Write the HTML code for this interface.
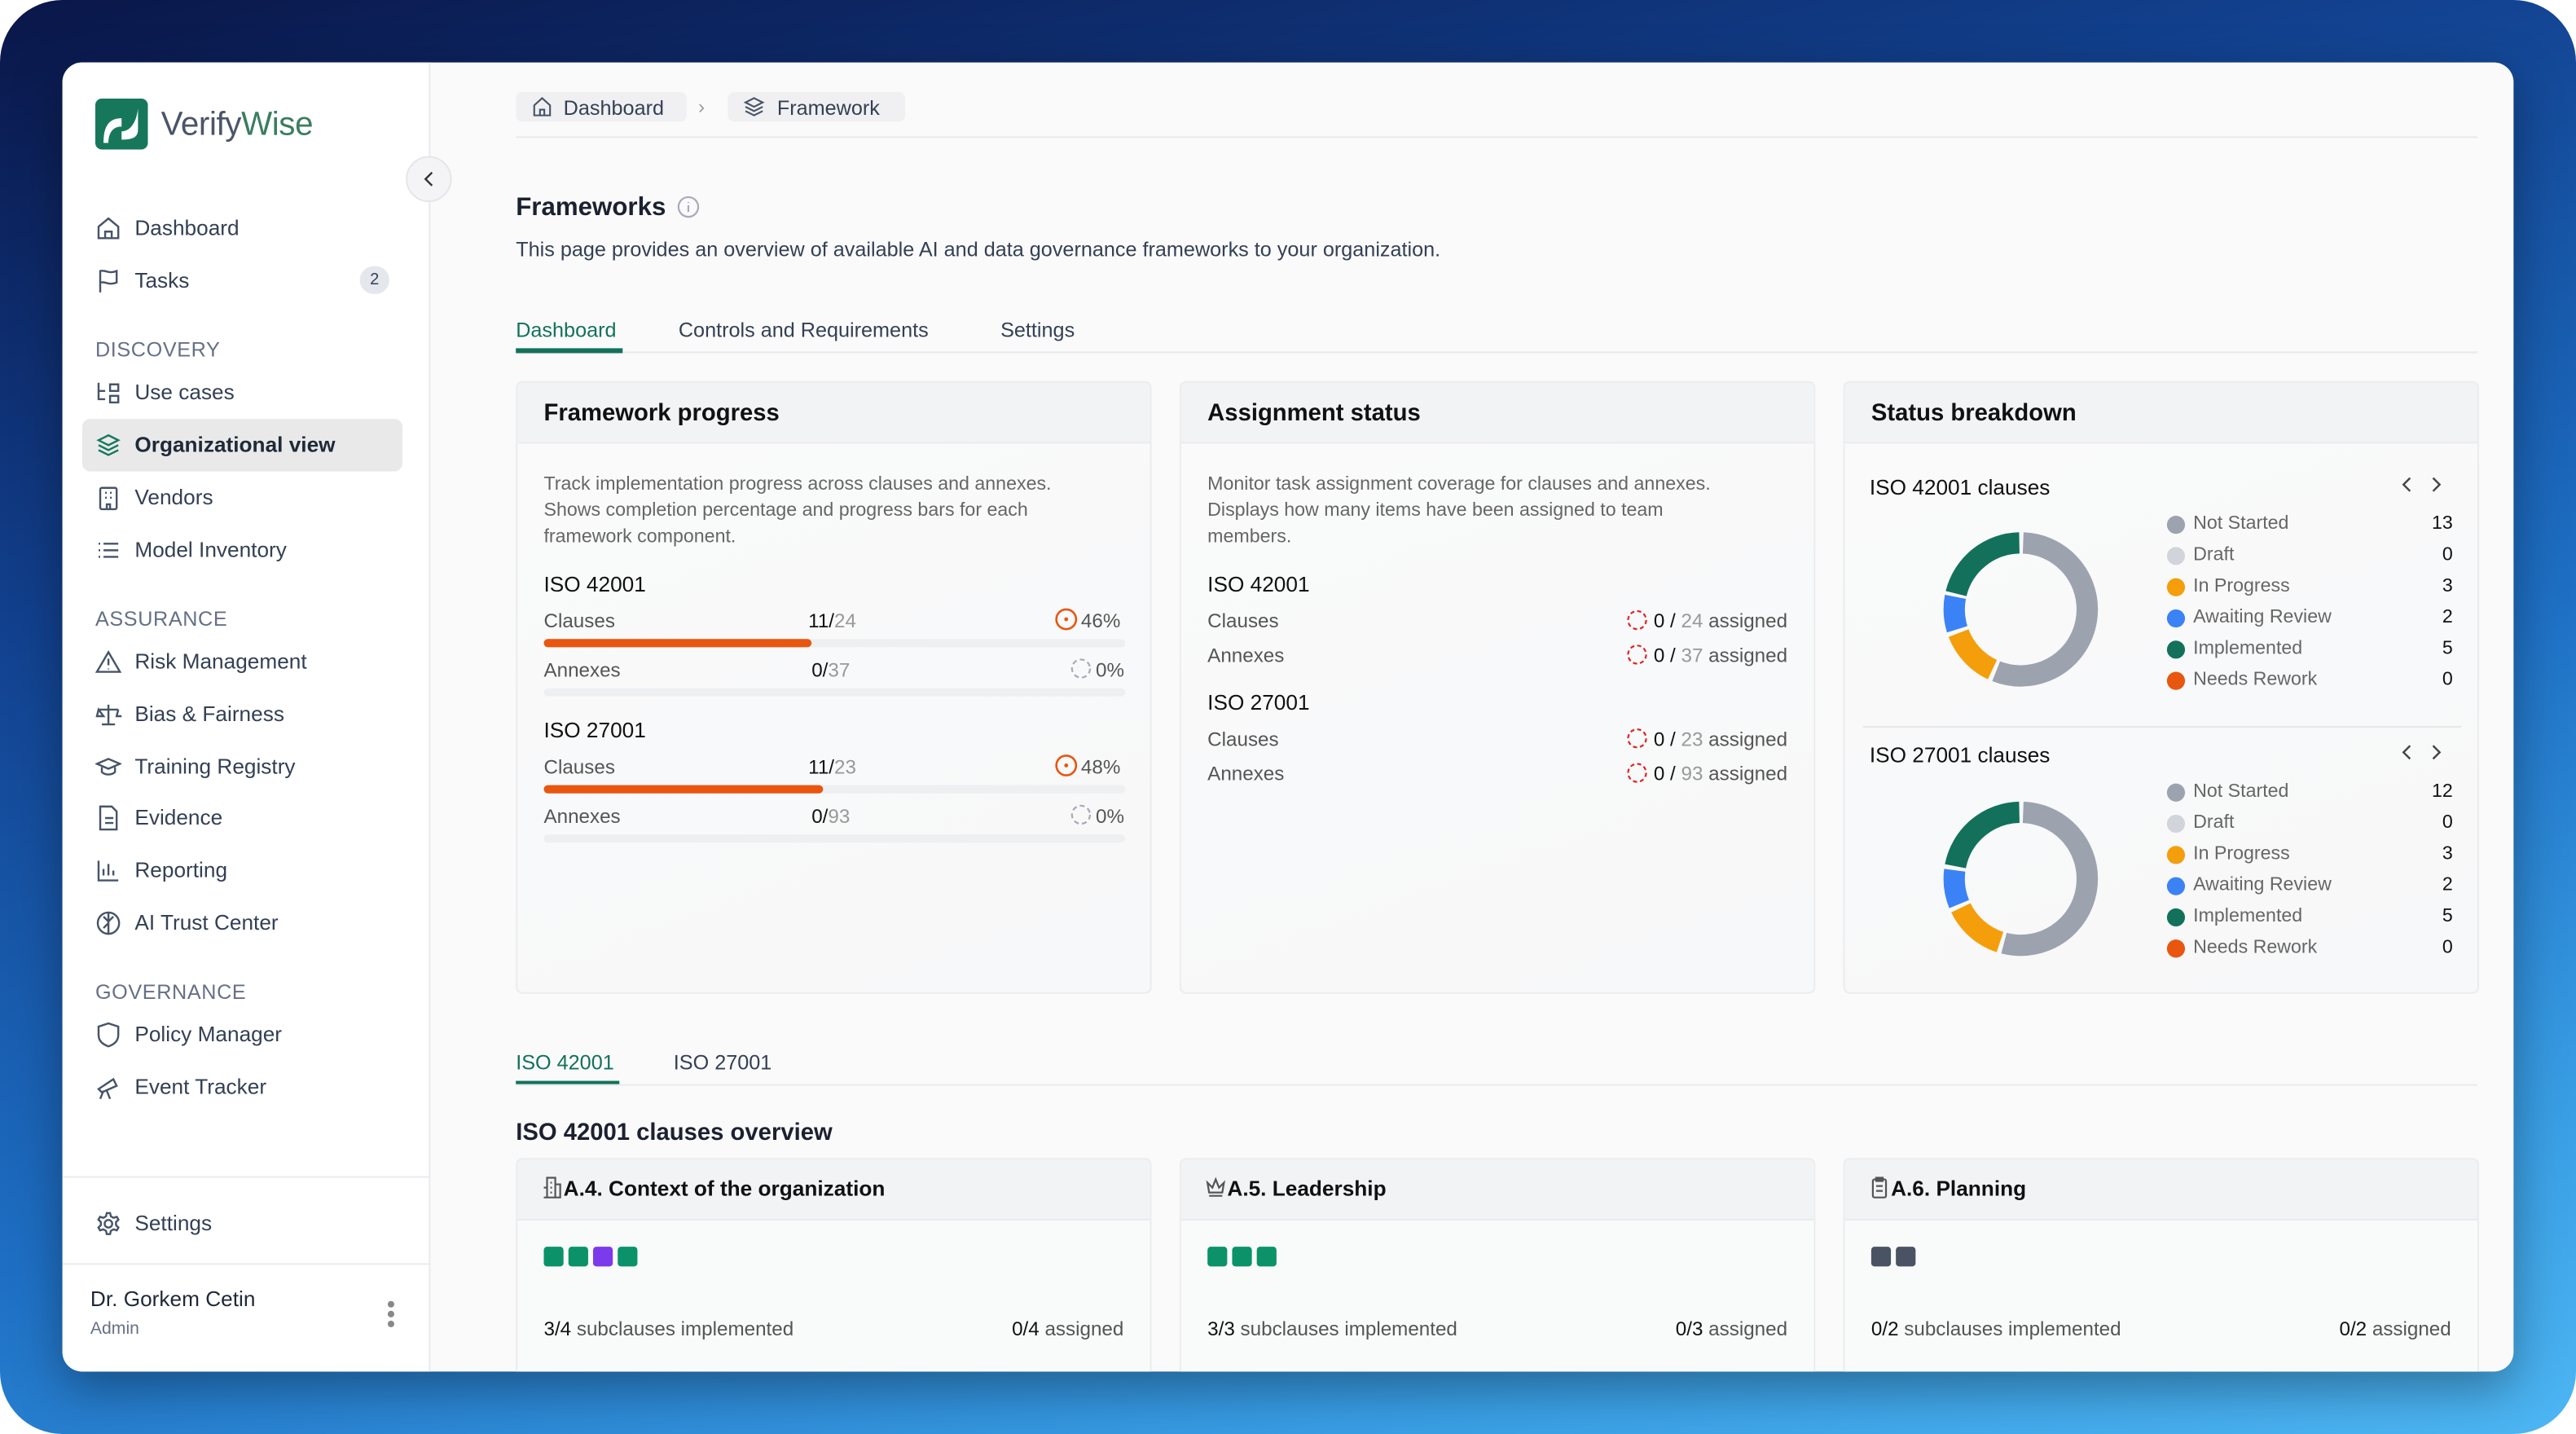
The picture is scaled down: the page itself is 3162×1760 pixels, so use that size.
<!DOCTYPE html>
<html><head><meta charset="utf-8">
<style>
*{box-sizing:border-box;margin:0;padding:0}
html,body{width:3162px;height:1760px;overflow:hidden;background:#fff}
#s{position:absolute;left:0;top:0;width:1568px;height:873px;transform:scale(2.01658,2.01604);transform-origin:0 0;font-family:"Liberation Sans",sans-serif;color:#1c2130}
.bg{position:absolute;left:0;top:0;width:1568px;height:873px;border-radius:38px;background:linear-gradient(165deg,#0a1648 0%,#12418f 30%,#1e6fc4 60%,#3a9fe5 85%,#4db6f3 100%)}
.win{position:absolute;left:38px;top:38px;width:1492px;height:797px;border-radius:12px;background:#fafafa;overflow:hidden;box-shadow:0 10px 30px rgba(0,0,0,.35)}
.side{position:absolute;left:0;top:0;width:224px;height:797px;background:#fff;border-right:1px solid #eaeaee}
.a{position:absolute;white-space:nowrap}
.nav{position:absolute;left:20px;font-size:13px;color:#344054;line-height:16px;white-space:nowrap}
.nav svg{position:absolute;left:0;top:0}
.nav span{position:absolute;left:24px;top:0;white-space:nowrap}
.sec{position:absolute;left:20px;font-size:12.5px;color:#667085;letter-spacing:.3px}
.card{position:absolute;top:194px;width:387px;height:373px;border:1px solid #ececef;border-radius:4px;background:linear-gradient(160deg,#fafafa,#f7f8f9);overflow:hidden}
.ch{height:37px;background:#f2f3f5;border-bottom:1px solid #ebebee;font-size:14.5px;font-weight:bold;padding:11px 16px;color:#111;white-space:nowrap}
.t12{font-size:11.5px;color:#666;line-height:16px}
.lbl{font-size:12px;color:#555}
.h13{font-size:13px;color:#111}
.bar{position:absolute;height:5px;border-radius:3px;background:#eeeff1}
.bar i{position:absolute;left:0;top:0;height:5px;border-radius:3px;background:#e8560f}
.leg{font-size:11.5px;color:#666}
.dot{position:absolute;width:11px;height:11px;border-radius:50%}
.num{font-size:11.5px;color:#111;text-align:right;width:30px}
.bc{position:absolute;top:667px;width:387px;height:140px;border:1px solid #ececef;border-radius:4px;background:#f9fafa;overflow:hidden}
.bc .ch{font-size:13px;padding:10px 14px}
.bc .ch svg{vertical-align:-2px}
.sq{display:inline-block;width:12px;height:12px;border-radius:2px;margin-right:3px}
</style></head><body><div id="s">
<div class="bg"></div>
<div class="win">
 <div class="side">
  <svg class="a" style="left:20px;top:22px" width="32" height="31" viewBox="0 0 32 31"><rect width="32" height="31" rx="4" fill="#17775a"/><path d="M5 27 C5 16 9 12 16 12 L16 20 C21 20 25 15 26 6 L26 19 C26 24 22 25 16 25 L16 17 C10 17 8 22 8 27Z" fill="#fff"/></svg>
  <div class="a" style="left:60px;top:27px;font-size:20px;letter-spacing:-.2px"><span style="color:#4b5568">Verify</span><span style="color:#3b7d60">Wise</span></div>
  <div class="nav" style="top:93px"><svg width="16" height="16" viewBox="0 0 16 16" fill="none" stroke="#475467" stroke-width="1.2"><path d="M2 7L8 2l6 5v7H2z M6 14V10h4v4"/></svg><span>Dashboard</span></div>
  <div class="nav" style="top:125px"><svg width="16" height="16" viewBox="0 0 16 16" fill="none" stroke="#475467" stroke-width="1.2"><path d="M3 15V2c3-1 5 2 10 0v7c-5 2-7-1-10 0"/></svg><span>Tasks</span></div>
  <div class="a" style="left:181px;top:124px;width:18px;height:17px;border-radius:9px;background:#e4e7ec;font-size:10px;color:#344054;text-align:center;line-height:17px">2</div>
  <div class="sec" style="top:168px">DISCOVERY</div>
  <div class="nav" style="top:193px"><svg width="16" height="16" viewBox="0 0 16 16" fill="none" stroke="#475467" stroke-width="1.2"><path d="M2 2v10h4M2 7h4M9 3h5v4H9zM9 10h5v4H9z"/></svg><span>Use cases</span></div>
  <div class="a" style="left:12px;top:217px;width:195px;height:32px;border-radius:5px;background:#e9e9ea"></div>
  <div class="nav" style="top:225px;font-weight:bold;color:#1f2937"><svg width="16" height="16" viewBox="0 0 16 16" fill="none" stroke="#17775a" stroke-width="1.2"><path d="M8 2l6 3-6 3-6-3zM2 8l6 3 6-3M2 11l6 3 6-3"/></svg><span>Organizational view</span></div>
  <div class="nav" style="top:257px"><svg width="16" height="16" viewBox="0 0 16 16" fill="none" stroke="#475467" stroke-width="1.2"><rect x="3" y="2" width="10" height="13" rx="1"/><path d="M6 5h1M9 5h1M6 8h1M9 8h1M7 15v-3h2v3"/></svg><span>Vendors</span></div>
  <div class="nav" style="top:289px"><svg width="16" height="16" viewBox="0 0 16 16" fill="none" stroke="#475467" stroke-width="1.2"><path d="M5 4h9M5 8h9M5 12h9M2 4h1M2 8h1M2 12h1"/></svg><span>Model Inventory</span></div>
  <div class="sec" style="top:332px">ASSURANCE</div>
  <div class="nav" style="top:357px"><svg width="16" height="16" viewBox="0 0 16 16" fill="none" stroke="#475467" stroke-width="1.2"><path d="M8 2l7 12H1zM8 6v4M8 12v.5"/></svg><span>Risk Management</span></div>
  <div class="nav" style="top:389px"><svg width="16" height="16" viewBox="0 0 16 16" fill="none" stroke="#475467" stroke-width="1.2"><path d="M8 2v12M4 14h8M2 5h12M2 5l-1 4h4zM14 5l-1 4h4"/></svg><span>Bias &amp; Fairness</span></div>
  <div class="nav" style="top:421px"><svg width="16" height="16" viewBox="0 0 16 16" fill="none" stroke="#475467" stroke-width="1.2"><path d="M1 6l7-3 7 3-7 3zM4 8v3c2 2 6 2 8 0V8"/></svg><span>Training Registry</span></div>
  <div class="nav" style="top:452px"><svg width="16" height="16" viewBox="0 0 16 16" fill="none" stroke="#475467" stroke-width="1.2"><path d="M3 1h7l3 3v11H3zM6 8h5M6 11h5"/></svg><span>Evidence</span></div>
  <div class="nav" style="top:484px"><svg width="16" height="16" viewBox="0 0 16 16" fill="none" stroke="#475467" stroke-width="1.2"><path d="M2 2v12h12M5 11V7M8 11V4M11 11V8"/></svg><span>Reporting</span></div>
  <div class="nav" style="top:516px"><svg width="16" height="16" viewBox="0 0 16 16" fill="none" stroke="#475467" stroke-width="1.2"><circle cx="8" cy="8" r="6.5"/><path d="M8 1.5v13M5 4l3 3 3-3M5 11l3-3"/></svg><span>AI Trust Center</span></div>
  <div class="sec" style="top:559px">GOVERNANCE</div>
  <div class="nav" style="top:584px"><svg width="16" height="16" viewBox="0 0 16 16" fill="none" stroke="#475467" stroke-width="1.2"><path d="M8 1l6 2v5c0 4-3 6-6 7-3-1-6-3-6-7V3z"/></svg><span>Policy Manager</span></div>
  <div class="nav" style="top:616px"><svg width="16" height="16" viewBox="0 0 16 16" fill="none" stroke="#475467" stroke-width="1.2"><path d="M2 9l9-6 2 4-9 4zM5 10l-2 5M7 10l2 5"/></svg><span>Event Tracker</span></div>
  <div class="a" style="left:0;top:678px;width:224px;height:1px;background:#ebebef"></div>
  <div class="nav" style="top:699px"><svg width="16" height="16" viewBox="0 0 16 16" fill="none" stroke="#475467" stroke-width="1.2"><circle cx="8" cy="8" r="2.3"/><path d="M7 1.5h2l.5 2 1.6.9 2-.6 1 1.7-1.5 1.5v1.8l1.5 1.5-1 1.7-2-.6-1.6.9-.5 2H7l-.5-2-1.6-.9-2 .6-1-1.7 1.5-1.5V7L1.9 5.5l1-1.7 2 .6L6.5 3.5z"/></svg><span>Settings</span></div>
  <div class="a" style="left:0;top:731px;width:224px;height:1px;background:#ebebef"></div>
  <div class="a" style="left:17px;top:745px;font-size:13px;color:#1f2937">Dr. Gorkem Cetin</div>
  <div class="a" style="left:17px;top:765px;font-size:10.5px;color:#667085">Admin</div>
  <div class="a" style="left:198px;top:754px;width:4px"><i style="display:block;width:4px;height:4px;border-radius:50%;background:#888;margin-bottom:2px"></i><i style="display:block;width:4px;height:4px;border-radius:50%;background:#888;margin-bottom:2px"></i><i style="display:block;width:4px;height:4px;border-radius:50%;background:#888"></i></div>
 </div>
 <div class="a" style="left:209px;top:57px;width:28px;height:28px;border-radius:50%;background:#f4f4f6;border:1px solid #e6e6ea"><svg width="28" height="28" viewBox="0 0 28 28" style="position:absolute;left:-1px;top:-1px" fill="none" stroke="#333" stroke-width="1.2"><path d="M16 10l-4 4 4 4"/></svg></div>

 <!-- main -->
 <div class="a" style="left:276px;top:18px;width:104px;height:18px;border-radius:4px;background:#f0f0f2"></div>
 <svg class="a" style="left:285px;top:20px" width="14" height="14" viewBox="0 0 16 16" fill="none" stroke="#475467" stroke-width="1.2"><path d="M2.5 7L8 2l5.5 5v7h-11zM6.5 14v-4h3v4"/></svg>
 <div class="a" style="left:305px;top:21px;font-size:12.5px;color:#344054">Dashboard</div>
 <div class="a" style="left:387px;top:20px;font-size:12px;color:#999">›</div>
 <div class="a" style="left:405px;top:18px;width:108px;height:18px;border-radius:4px;background:#f0f0f2"></div>
 <svg class="a" style="left:414px;top:20px" width="14" height="14" viewBox="0 0 16 16" fill="none" stroke="#475467" stroke-width="1.2"><path d="M8 2l6 3-6 3-6-3zM2 8l6 3 6-3M2 11l6 3 6-3"/></svg>
 <div class="a" style="left:435px;top:21px;font-size:12.5px;color:#344054">Framework</div>
 <div class="a" style="left:276px;top:45px;width:1194px;height:1px;background:#e9e9ee"></div>

 <div class="a" style="left:276px;top:80px;font-size:15.5px;font-weight:bold;color:#1c2130">Frameworks</div>
 <svg class="a" style="left:374px;top:81px" width="14" height="14" viewBox="0 0 14 14" fill="none" stroke="#aab" stroke-width="1.1"><circle cx="7" cy="7" r="6"/><path d="M7 6v4M7 4v.5"/></svg>
 <div class="a" style="left:276px;top:107px;font-size:12.5px;color:#344054">This page provides an overview of available AI and data governance frameworks to your organization.</div>

 <div class="a" style="left:276px;top:156px;font-size:12.5px;color:#13715b">Dashboard</div>
 <div class="a" style="left:375px;top:156px;font-size:12.5px;color:#344054">Controls and Requirements</div>
 <div class="a" style="left:571px;top:156px;font-size:12.5px;color:#344054">Settings</div>
 <div class="a" style="left:276px;top:176px;width:1194px;height:1px;background:#e9e9ee"></div>
 <div class="a" style="left:276px;top:174px;width:65px;height:3px;background:#13715b"></div>

 <!-- card 1 -->
 <div class="card" style="left:276px">
  <div class="ch">Framework progress</div>
  <div class="a t12" style="left:16px;top:54px">Track implementation progress across clauses and annexes.<br>Shows completion percentage and progress bars for each<br>framework component.</div>
  <div class="a h13" style="left:16px;top:115px">ISO 42001</div>
  <div class="a lbl" style="left:16px;top:138px">Clauses</div>
  <div class="a lbl" style="left:177px;top:138px;color:#111">11/<span style="color:#999">24</span></div>
  <svg class="a" style="left:327px;top:137px" width="14" height="14"><circle cx="7" cy="7" r="6" fill="none" stroke="#e8560f" stroke-width="1.3"/><circle cx="7" cy="7" r="1.2" fill="#e8560f"/></svg>
  <div class="a lbl" style="left:343px;top:138px">46%</div>
  <div class="bar" style="left:16px;top:156px;width:354px"><i style="width:163px"></i></div>
  <div class="a lbl" style="left:16px;top:168px">Annexes</div>
  <div class="a lbl" style="left:179px;top:168px;color:#111">0/<span style="color:#999">37</span></div>
  <svg class="a" style="left:336px;top:167px" width="14" height="14"><circle cx="7" cy="7" r="5.5" fill="none" stroke="#aab" stroke-width="1.1" stroke-dasharray="3 2"/></svg>
  <div class="a lbl" style="left:352px;top:168px">0%</div>
  <div class="bar" style="left:16px;top:186px;width:354px"></div>
  <div class="a h13" style="left:16px;top:204px">ISO 27001</div>
  <div class="a lbl" style="left:177px;top:227px;color:#111">11/<span style="color:#999">23</span></div>
  <div class="a lbl" style="left:16px;top:227px">Clauses</div>
  <svg class="a" style="left:327px;top:226px" width="14" height="14"><circle cx="7" cy="7" r="6" fill="none" stroke="#e8560f" stroke-width="1.3"/><circle cx="7" cy="7" r="1.2" fill="#e8560f"/></svg>
  <div class="a lbl" style="left:343px;top:227px">48%</div>
  <div class="bar" style="left:16px;top:245px;width:354px"><i style="width:170px"></i></div>
  <div class="a lbl" style="left:16px;top:257px">Annexes</div>
  <div class="a lbl" style="left:179px;top:257px;color:#111">0/<span style="color:#999">93</span></div>
  <svg class="a" style="left:336px;top:256px" width="14" height="14"><circle cx="7" cy="7" r="5.5" fill="none" stroke="#aab" stroke-width="1.1" stroke-dasharray="3 2"/></svg>
  <div class="a lbl" style="left:352px;top:257px">0%</div>
  <div class="bar" style="left:16px;top:275px;width:354px"></div>
 </div>

 <!-- card 2 -->
 <div class="card" style="left:680px">
  <div class="ch">Assignment status</div>
  <div class="a t12" style="left:16px;top:54px">Monitor task assignment coverage for clauses and annexes.<br>Displays how many items have been assigned to team<br>members.</div>
  <div class="a h13" style="left:16px;top:115px">ISO 42001</div>
  <div class="a lbl" style="left:16px;top:138px">Clauses</div>
  <div class="a lbl" style="left:16px;top:159px">Annexes</div>
  <div class="a h13" style="left:16px;top:187px">ISO 27001</div>
  <div class="a lbl" style="left:16px;top:210px">Clauses</div>
  <div class="a lbl" style="left:16px;top:231px">Annexes</div>
  <div class="a lbl" style="right:16px;top:138px;text-align:right"><svg width="13" height="13" style="vertical-align:-2px"><circle cx="6.5" cy="6.5" r="5.5" fill="none" stroke="#e02424" stroke-width="1.1" stroke-dasharray="2.5 1.8"/></svg> <span style="color:#111">0 / </span><span style="color:#999">24</span> assigned</div>
  <div class="a lbl" style="right:16px;top:159px;text-align:right"><svg width="13" height="13" style="vertical-align:-2px"><circle cx="6.5" cy="6.5" r="5.5" fill="none" stroke="#e02424" stroke-width="1.1" stroke-dasharray="2.5 1.8"/></svg> <span style="color:#111">0 / </span><span style="color:#999">37</span> assigned</div>
  <div class="a lbl" style="right:16px;top:210px;text-align:right"><svg width="13" height="13" style="vertical-align:-2px"><circle cx="6.5" cy="6.5" r="5.5" fill="none" stroke="#e02424" stroke-width="1.1" stroke-dasharray="2.5 1.8"/></svg> <span style="color:#111">0 / </span><span style="color:#999">23</span> assigned</div>
  <div class="a lbl" style="right:16px;top:231px;text-align:right"><svg width="13" height="13" style="vertical-align:-2px"><circle cx="6.5" cy="6.5" r="5.5" fill="none" stroke="#e02424" stroke-width="1.1" stroke-dasharray="2.5 1.8"/></svg> <span style="color:#111">0 / </span><span style="color:#999">93</span> assigned</div>
 </div>

 <!-- card 3 -->
 <div class="card" style="left:1084px">
  <div class="ch">Status breakdown</div>
  <div class="a h13" style="left:15px;top:56px">ISO 42001 clauses</div>
  <svg class="a" style="left:336px;top:55px" width="30" height="14" fill="none" stroke="#444" stroke-width="1.2"><path d="M8 3l-4 4 4 4M22 3l4 4-4 4"/></svg>
  <svg class="a" style="left:59px;top:90px" width="96" height="96" viewBox="0 0 96 96"><g transform="rotate(-90 48 48)" fill="none" stroke-width="13">
   <circle cx="48" cy="48" r="40.5" stroke="#9ca3af" stroke-dasharray="141 255" stroke-dashoffset="-1.5"/>
   <circle cx="48" cy="48" r="40.5" stroke="#f59e0b" stroke-dasharray="31 255" stroke-dashoffset="-145"/>
   <circle cx="48" cy="48" r="40.5" stroke="#3b82f6" stroke-dasharray="20 255" stroke-dashoffset="-178.5"/>
   <circle cx="48" cy="48" r="40.5" stroke="#13715b" stroke-dasharray="53 255" stroke-dashoffset="-200.5"/></g></svg>
  <div class="dot" style="left:196px;top:81px;background:#9ca3af"></div><div class="a leg" style="left:212px;top:80px">Not Started</div><div class="a num" style="left:340px;top:80px">13</div>
  <div class="dot" style="left:196px;top:100px;background:#d1d5db"></div><div class="a leg" style="left:212px;top:99px">Draft</div><div class="a num" style="left:340px;top:99px">0</div>
  <div class="dot" style="left:196px;top:119px;background:#f59e0b"></div><div class="a leg" style="left:212px;top:118px">In Progress</div><div class="a num" style="left:340px;top:118px">3</div>
  <div class="dot" style="left:196px;top:138px;background:#3b82f6"></div><div class="a leg" style="left:212px;top:137px">Awaiting Review</div><div class="a num" style="left:340px;top:137px">2</div>
  <div class="dot" style="left:196px;top:157px;background:#13715b"></div><div class="a leg" style="left:212px;top:156px">Implemented</div><div class="a num" style="left:340px;top:156px">5</div>
  <div class="dot" style="left:196px;top:176px;background:#e8560f"></div><div class="a leg" style="left:212px;top:175px">Needs Rework</div><div class="a num" style="left:340px;top:175px">0</div>
  <div class="a" style="left:11px;top:209px;width:364px;height:1px;background:#e6e6ea"></div>
  <div class="a h13" style="left:15px;top:219px">ISO 27001 clauses</div>
  <svg class="a" style="left:336px;top:218px" width="30" height="14" fill="none" stroke="#444" stroke-width="1.2"><path d="M8 3l-4 4 4 4M22 3l4 4-4 4"/></svg>
  <svg class="a" style="left:59px;top:254px" width="96" height="96" viewBox="0 0 96 96"><g transform="rotate(-90 48 48)" fill="none" stroke-width="13">
   <circle cx="48" cy="48" r="40.5" stroke="#9ca3af" stroke-dasharray="136 255" stroke-dashoffset="-1.5"/>
   <circle cx="48" cy="48" r="40.5" stroke="#f59e0b" stroke-dasharray="32.5 255" stroke-dashoffset="-140"/>
   <circle cx="48" cy="48" r="40.5" stroke="#3b82f6" stroke-dasharray="21 255" stroke-dashoffset="-175"/>
   <circle cx="48" cy="48" r="40.5" stroke="#13715b" stroke-dasharray="55 255" stroke-dashoffset="-198.5"/></g></svg>
  <div class="dot" style="left:196px;top:244px;background:#9ca3af"></div><div class="a leg" style="left:212px;top:243px">Not Started</div><div class="a num" style="left:340px;top:243px">12</div>
  <div class="dot" style="left:196px;top:263px;background:#d1d5db"></div><div class="a leg" style="left:212px;top:262px">Draft</div><div class="a num" style="left:340px;top:262px">0</div>
  <div class="dot" style="left:196px;top:282px;background:#f59e0b"></div><div class="a leg" style="left:212px;top:281px">In Progress</div><div class="a num" style="left:340px;top:281px">3</div>
  <div class="dot" style="left:196px;top:301px;background:#3b82f6"></div><div class="a leg" style="left:212px;top:300px">Awaiting Review</div><div class="a num" style="left:340px;top:300px">2</div>
  <div class="dot" style="left:196px;top:320px;background:#13715b"></div><div class="a leg" style="left:212px;top:319px">Implemented</div><div class="a num" style="left:340px;top:319px">5</div>
  <div class="dot" style="left:196px;top:339px;background:#e8560f"></div><div class="a leg" style="left:212px;top:338px">Needs Rework</div><div class="a num" style="left:340px;top:338px">0</div>
 </div>

 <div class="a" style="left:276px;top:602px;font-size:12.5px;color:#13715b">ISO 42001</div>
 <div class="a" style="left:372px;top:602px;font-size:12.5px;color:#344054">ISO 27001</div>
 <div class="a" style="left:276px;top:622px;width:1194px;height:1px;background:#e9e9ee"></div>
 <div class="a" style="left:276px;top:620px;width:63px;height:2px;background:#13715b"></div>
 <div class="a" style="left:276px;top:644px;font-size:14.5px;font-weight:bold;color:#1c2130">ISO 42001 clauses overview</div>

 <div class="bc" style="left:276px"><div class="ch"><svg width="14" height="14" viewBox="0 0 14 14" fill="none" stroke="#555" stroke-width="1.1"><path d="M4 1h5v12H4zM9 5h3v8H9M2 7h2v6H2M6 4h1M6 7h1M6 10h1"/></svg>A.4. Context of the organization</div>
  <div class="a" style="left:16px;top:52px"><i class="sq" style="background:#0b9268"></i><i class="sq" style="background:#0b9268"></i><i class="sq" style="background:#7c3aed"></i><i class="sq" style="background:#0b9268"></i></div>
  <div class="a lbl" style="left:16px;top:96px"><b style="color:#111;font-weight:normal">3/4</b> subclauses implemented</div>
  <div class="a lbl" style="right:16px;top:96px"><b style="color:#111;font-weight:normal">0/4</b> assigned</div></div>
 <div class="bc" style="left:680px"><div class="ch"><svg width="14" height="14" viewBox="0 0 14 14" fill="none" stroke="#555" stroke-width="1.1"><path d="M2 4l3 3 2-5 2 5 3-3-1 6H3zM3 12h8"/></svg>A.5. Leadership</div>
  <div class="a" style="left:16px;top:52px"><i class="sq" style="background:#0b9268"></i><i class="sq" style="background:#0b9268"></i><i class="sq" style="background:#0b9268"></i></div>
  <div class="a lbl" style="left:16px;top:96px"><b style="color:#111;font-weight:normal">3/3</b> subclauses implemented</div>
  <div class="a lbl" style="right:16px;top:96px"><b style="color:#111;font-weight:normal">0/3</b> assigned</div></div>
 <div class="bc" style="left:1084px"><div class="ch"><svg width="14" height="14" viewBox="0 0 14 14" fill="none" stroke="#555" stroke-width="1.1"><rect x="3" y="2" width="8" height="11" rx="1"/><path d="M5 1h4v2H5zM5 6h4M5 9h4"/></svg>A.6. Planning</div>
  <div class="a" style="left:16px;top:52px"><i class="sq" style="background:#4a5363"></i><i class="sq" style="background:#4a5363"></i></div>
  <div class="a lbl" style="left:16px;top:96px"><b style="color:#111;font-weight:normal">0/2</b> subclauses implemented</div>
  <div class="a lbl" style="right:16px;top:96px"><b style="color:#111;font-weight:normal">0/2</b> assigned</div></div>
</div>
</div></body></html>
